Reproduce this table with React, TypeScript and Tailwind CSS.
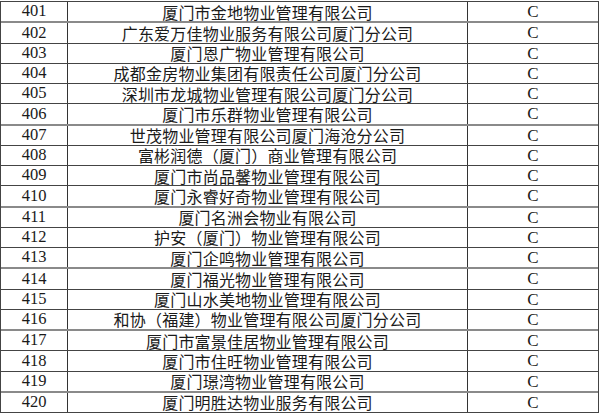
const rows: [number, string][] = [
  [401, "厦门市金地物业管理有限公司"],
  [402, "广东爱万佳物业服务有限公司厦门分公司"],
  [403, "厦门恩广物业管理有限公司"],
  [404, "成都金房物业集团有限责任公司厦门分公司"],
  [405, "深圳市龙城物业管理有限公司厦门分公司"],
  [406, "厦门市乐群物业管理有限公司"],
  [407, "世茂物业管理有限公司厦门海沧分公司"],
  [408, "富彬润德（厦门）商业管理有限公司"],
  [409, "厦门市尚品馨物业管理有限公司"],
  [410, "厦门永睿好奇物业管理有限公司"],
  [411, "厦门名洲会物业有限公司"],
  [412, "护安（厦门）物业管理有限公司"],
  [413, "厦门企鸣物业管理有限公司"],
  [414, "厦门福光物业管理有限公司"],
  [415, "厦门山水美地物业管理有限公司"],
  [416, "和协（福建）物业管理有限公司厦门分公司"],
  [417, "厦门市富景佳居物业管理有限公司"],
  [418, "厦门市住旺物业管理有限公司"],
  [419, "厦门璟湾物业管理有限公司"],
  [420, "厦门明胜达物业服务有限公司"],
];

// rows whose bottom rule looks lighter/thicker in the scan
const grayRules = new Set([401, 406, 410, 413, 416, 419]);

export default function App() {
  return (
    <div className="h-[414px] w-[600px] overflow-hidden bg-white pt-px text-[#1a1a1a]">
      <div className="flex h-[412px] w-[599px] flex-col border-l border-r border-t border-[#444]">
        {rows.map(([no, name]) => (
          <div
            key={no}
            className={
              grayRules.has(no)
                ? "flex min-h-0 flex-1 border-b-2 border-[#8a8a8a]"
                : "flex min-h-0 flex-1 border-b border-[#444]"
            }
          >
            <div className="flex w-[67px] items-center justify-center border-r border-[#333] font-['Liberation_Serif',serif] text-[16.5px] leading-none">
              {no}
            </div>
            <div className="flex w-[400px] items-center justify-center border-r border-[#333] font-['Noto_Sans_CJK_SC','Noto_Sans',sans-serif] text-[16px] leading-none tracking-[0.2px]">
              {name}
            </div>
            <div className="flex flex-1 items-center justify-center font-['Liberation_Serif',serif] text-[17px] leading-none">
              C
            </div>
          </div>
        ))}
      </div>
    </div>
  );
}
